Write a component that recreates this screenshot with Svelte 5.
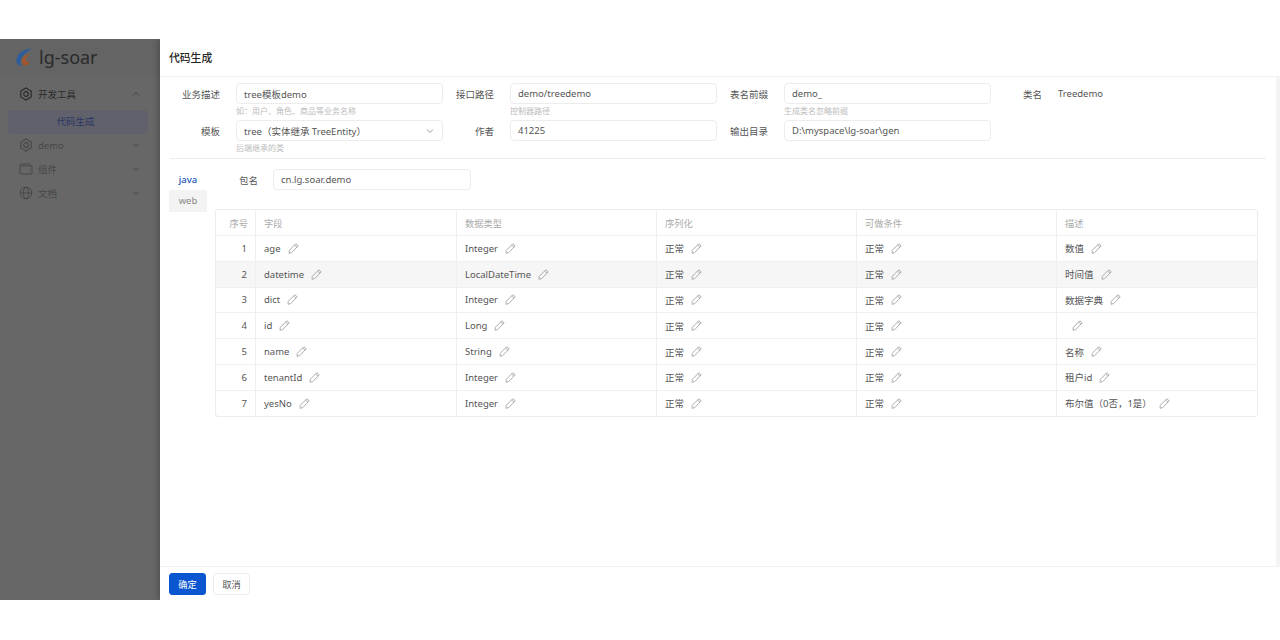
<script lang="ts">
const menus = [
  { name: 'demo', icon: 'hex' },
  { name: '组件', icon: 'wallet' },
  { name: '文档', icon: 'globe' }
];

const rows = [
  { field: 'age', type: 'Integer', desc: '数值' },
  { field: 'datetime', type: 'LocalDateTime', desc: '时间值' },
  { field: 'dict', type: 'Integer', desc: '数据字典' },
  { field: 'id', type: 'Long', desc: '' },
  { field: 'name', type: 'String', desc: '名称' },
  { field: 'tenantId', type: 'Integer', desc: '租户id' },
  { field: 'yesNo', type: 'Integer', desc: '布尔值（0否，1是）' }
];
</script>

{#snippet pencil()}
  <svg class="pencil" viewBox="0 0 11 11" fill="none" stroke="currentColor" stroke-width="0.8">
    <path d="M7.800 0.800 10.200 2.800 3.800 9.500 1 10.300 1.300 7.300Z" />
    <path d="M6.600 2.100 9 4.200" />
  </svg>
{/snippet}

{#snippet chevron(up: boolean)}
  <svg class="chevron" viewBox="0 0 10 10" fill="none" stroke="currentColor" stroke-width="1">
    <path d={up ? 'M2 6.500 5 3.500 8 6.500' : 'M2 3.500 5 6.500 8 3.500'} />
  </svg>
{/snippet}

{#snippet hexIcon()}
  <svg class="menu-icon" viewBox="0 0 14 14" fill="none" stroke="currentColor" stroke-width="1.200">
    <path d="M7 1 12.200 4v6L7 13 1.800 10V4Z" />
    <circle cx="7" cy="7" r="2.300" />
  </svg>
{/snippet}

{#snippet walletIcon()}
  <svg class="menu-icon" viewBox="0 0 14 14" fill="none" stroke="currentColor" stroke-width="1">
    <path d="M1 3.200C1 2.500 1.500 2 2.200 2H11V4" />
    <path d="M1 3.200V11C1 11.600 1.400 12 2 12H13V4H2" />
    <path d="M10 8h1" />
  </svg>
{/snippet}

{#snippet globeIcon()}
  <svg class="menu-icon" viewBox="0 0 14 14" fill="none" stroke="currentColor" stroke-width="1">
    <circle cx="7" cy="7" r="5.800" />
    <ellipse cx="7" cy="7" rx="2.500" ry="5.800" />
    <path d="M1.200 7h11.600" />
  </svg>
{/snippet}

<div class="page">
  <aside class="sider">
    <div class="logo">
      <svg class="logo-mark" viewBox="0 0 16 18">
        <path d="M15.800 0.500C9.500 0.800 1.500 4.500 0.500 11.500 0 15 2 17.800 5.500 17.800 3.800 15.500 4 12.500 5.800 9.500 7.800 6.200 11.500 3 15.800 0.500Z" fill="#2c5c9c" />
        <path d="M13.500 6.200C9.800 6.500 6.500 9 6 12.500c-.3 2.500 1 4.700 3.500 5.300 2.600-.6 3.800-2.800 3.300-5-1.200 1-2.800 1-3.300.2C9 11.500 11 8.300 13.500 6.200Z" fill="#a5552b" />
      </svg>
      <span>lg-soar</span>
    </div>
    <nav>
      <div class="menu-item open">
        {@render hexIcon()}
        <span class="menu-name">开发工具</span>
        {@render chevron(true)}
      </div>
      <div class="sub-item">代码生成</div>
      {#each menus as menu}
        <div class="menu-item">
          {#if menu.icon === 'hex'}
            {@render hexIcon()}
          {:else if menu.icon === 'wallet'}
            {@render walletIcon()}
          {:else}
            {@render globeIcon()}
          {/if}
          <span class="menu-name">{menu.name}</span>
          {@render chevron(false)}
        </div>
      {/each}
    </nav>
  </aside>

  <main class="drawer">
    <header class="drawer-head">代码生成</header>

    <div class="drawer-body">
      <section class="form-grid">
        <div class="field">
          <span class="label">业务描述</span>
          <div class="control">
            <div class="input">tree模板demo</div>
            <div class="hint">如：用户、角色、商品等业务名称</div>
          </div>
        </div>
        <div class="field">
          <span class="label">接口路径</span>
          <div class="control">
            <div class="input">demo/treedemo</div>
            <div class="hint">控制器路径</div>
          </div>
        </div>
        <div class="field">
          <span class="label">表名前缀</span>
          <div class="control">
            <div class="input">demo_</div>
            <div class="hint">生成类名忽略前缀</div>
          </div>
        </div>
        <div class="field">
          <span class="label">类名</span>
          <div class="control">
            <div class="plain">Treedemo</div>
          </div>
        </div>
        <div class="field">
          <span class="label">模板</span>
          <div class="control">
            <div class="input select">
              <span>tree（实体继承 TreeEntity）</span>
              {@render chevron(false)}
            </div>
            <div class="hint">后端继承的类</div>
          </div>
        </div>
        <div class="field">
          <span class="label">作者</span>
          <div class="control"><div class="input">41225</div></div>
        </div>
        <div class="field">
          <span class="label">输出目录</span>
          <div class="control"><div class="input">D:\myspace\lg-soar\gen</div></div>
        </div>
      </section>

      <section class="tabs-area">
        <div class="tabs">
          <div class="tab active">java</div>
          <div class="tab">web</div>
        </div>
        <div class="tab-panel">
          <div class="package">
            <span>包名</span>
            <div class="input">cn.lg.soar.demo</div>
          </div>
          <table>
            <colgroup>
              <col style="width: 39px" />
              <col style="width: 201px" />
              <col style="width: 200px" />
              <col style="width: 200px" />
              <col style="width: 200px" />
              <col />
            </colgroup>
            <thead>
              <tr>
                <th class="num">序号</th>
                <th>字段</th>
                <th>数据类型</th>
                <th>序列化</th>
                <th>可做条件</th>
                <th>描述</th>
              </tr>
            </thead>
            <tbody>
              {#each rows as row, i}
                <tr class:hover={i === 1}>
                  <td class="num">{i + 1}</td>
                  <td><div class="cell"><span>{row.field}</span>{@render pencil()}</div></td>
                  <td><div class="cell"><span>{row.type}</span>{@render pencil()}</div></td>
                  <td><div class="cell"><span>正常</span>{@render pencil()}</div></td>
                  <td><div class="cell"><span>正常</span>{@render pencil()}</div></td>
                  <td><div class="cell"><span>{row.desc}</span>{@render pencil()}</div></td>
                </tr>
              {/each}
            </tbody>
          </table>
        </div>
      </section>
    </div>

    <footer class="drawer-foot">
      <button class="btn primary">确定</button>
      <button class="btn">取消</button>
    </footer>
  </main>
</div>

<style>
  :global(body) {
    background: #fff;
    font-family: "Noto Sans", "Noto Sans CJK SC", sans-serif;
  }

  .page {
    display: flex;
    height: 561px;
    margin: 39px 0 40px;
    overflow: hidden;
    font-size: 9.5px;
    color: #555;
  }

  .sider {
    width: 160px;
    flex: none;
    background: #676767;
  }

  .logo {
    display: flex;
    align-items: center;
    gap: 7px;
    height: 36px;
    padding-left: 16px;
    font-size: 18px;
    color: #2a2a2a;
    background: #646464;
  }

  .logo-mark {
    width: 16px;
    height: 18px;
  }

  nav {
    padding-top: 7px;
  }

  .menu-item {
    display: flex;
    align-items: center;
    height: 24px;
    padding: 0 19px;
    color: #484848;
  }

  .menu-item.open {
    color: #2b2b2b;
    margin-bottom: 4px;
  }

  .menu-icon {
    width: 14px;
    height: 14px;
    margin-right: 5px;
  }

  .menu-name {
    flex: 1;
  }

  .chevron {
    width: 10px;
    height: 10px;
    color: #454545;
  }

  .sub-item {
    box-sizing: border-box;
    height: 24px;
    margin: 0 12px -1px 8px;
    padding-right: 5px;
    line-height: 24px;
    text-align: center;
    color: #2a3566;
    background: #60616b;
    border-radius: 4px;
  }

  .drawer {
    flex: 1;
    display: flex;
    flex-direction: column;
    min-width: 0;
    background: #fff;
    box-shadow: -3px 0 5px rgba(0, 0, 0, 0.18);
  }

  .drawer-head {
    height: 37px;
    line-height: 37px;
    padding-left: 9px;
    font-size: 10.8px;
    font-weight: 500;
    color: #262626;
    border-bottom: 1px solid #f0f0f0;
  }

  .drawer-body {
    flex: 1;
    padding: 6px 10px 0;
    border-right: 4px solid #f4f4f4;
  }

  .form-grid {
    display: grid;
    grid-template-columns: repeat(4, 274px);
    grid-auto-rows: min-content;
    height: 75px;
    border-bottom: 1px solid #ececec;
  }

  .field {
    display: flex;
    gap: 16px;
  }

  .field:nth-child(-n + 4) {
    height: 37px;
  }

  .label {
    display: flex;
    align-items: center;
    justify-content: flex-end;
    width: 50px;
    height: 21px;
    flex: none;
  }

  .control {
    width: 207px;
    flex: none;
  }

  .input {
    display: flex;
    align-items: center;
    height: 21px;
    box-sizing: border-box;
    padding: 0 7px;
    background: #fff;
    border: 1px solid #ececec;
    border-radius: 4px;
  }

  .select {
    justify-content: space-between;
  }

  .select .chevron {
    color: #999;
  }

  .plain {
    display: flex;
    align-items: center;
    height: 21px;
  }

  .hint {
    font-size: 8px;
    line-height: 14px;
    color: #bbb;
  }

  .tabs-area {
    display: flex;
    padding-top: 10px;
  }

  .tabs {
    width: 38px;
    flex: none;
    margin-left: -1px;
  }

  .tab {
    height: 22px;
    line-height: 22px;
    text-align: center;
    color: #888;
    background: #f3f3f3;
  }

  .tab.active {
    height: 21px;
    line-height: 21px;
    color: #1d55b8;
    background: none;
    font-weight: 500;
  }

  .tab-panel {
    flex: 1;
    min-width: 0;
    padding: 0 8px;
  }

  .package {
    display: flex;
    align-items: center;
    gap: 15px;
    padding-left: 24px;
    margin-bottom: 19px;
  }

  .package .input {
    width: 198px;
  }

  table {
    width: 1043px;
    table-layout: fixed;
    border-collapse: separate;
    border-spacing: 0;
    border: 1px solid #ececec;
    border-radius: 3px;
  }

  th,
  td {
    box-sizing: border-box;
    padding: 0 8px;
    text-align: left;
    font-weight: 400;
    border-bottom: 1px solid #efefef;
    border-left: 1px solid #efefef;
    white-space: nowrap;
  }

  th:first-child,
  td:first-child {
    border-left: none;
  }

  tbody tr:last-child td {
    height: 25px;
    border-bottom: none;
  }

  th {
    height: 26px;
    color: #aaa;
    font-size: 9.25px;
  }

  td {
    height: 25.8px;
  }

  .num {
    text-align: right;
  }

  th.num {
    padding: 0 7px 0 0;
  }

  tr.hover td {
    background: #f6f6f6;
  }

  .cell {
    display: flex;
    align-items: center;
    gap: 7px;
  }

  .pencil {
    width: 11px;
    height: 11px;
    color: #999;
  }

  .drawer-foot {
    display: flex;
    gap: 7px;
    box-sizing: border-box;
    height: 34px;
    padding: 6px 9px 0;
    border-top: 1px solid #f2f2f2;
  }

  .btn {
    width: 37px;
    height: 22px;
    padding: 0;
    font: inherit;
    font-size: 9.25px;
    color: #555;
    background: #fff;
    border: 1px solid #ececec;
    border-radius: 3px;
  }

  .btn.primary {
    color: #fff;
    background: #0a55d0;
    border-color: #0a55d0;
  }
</style>
